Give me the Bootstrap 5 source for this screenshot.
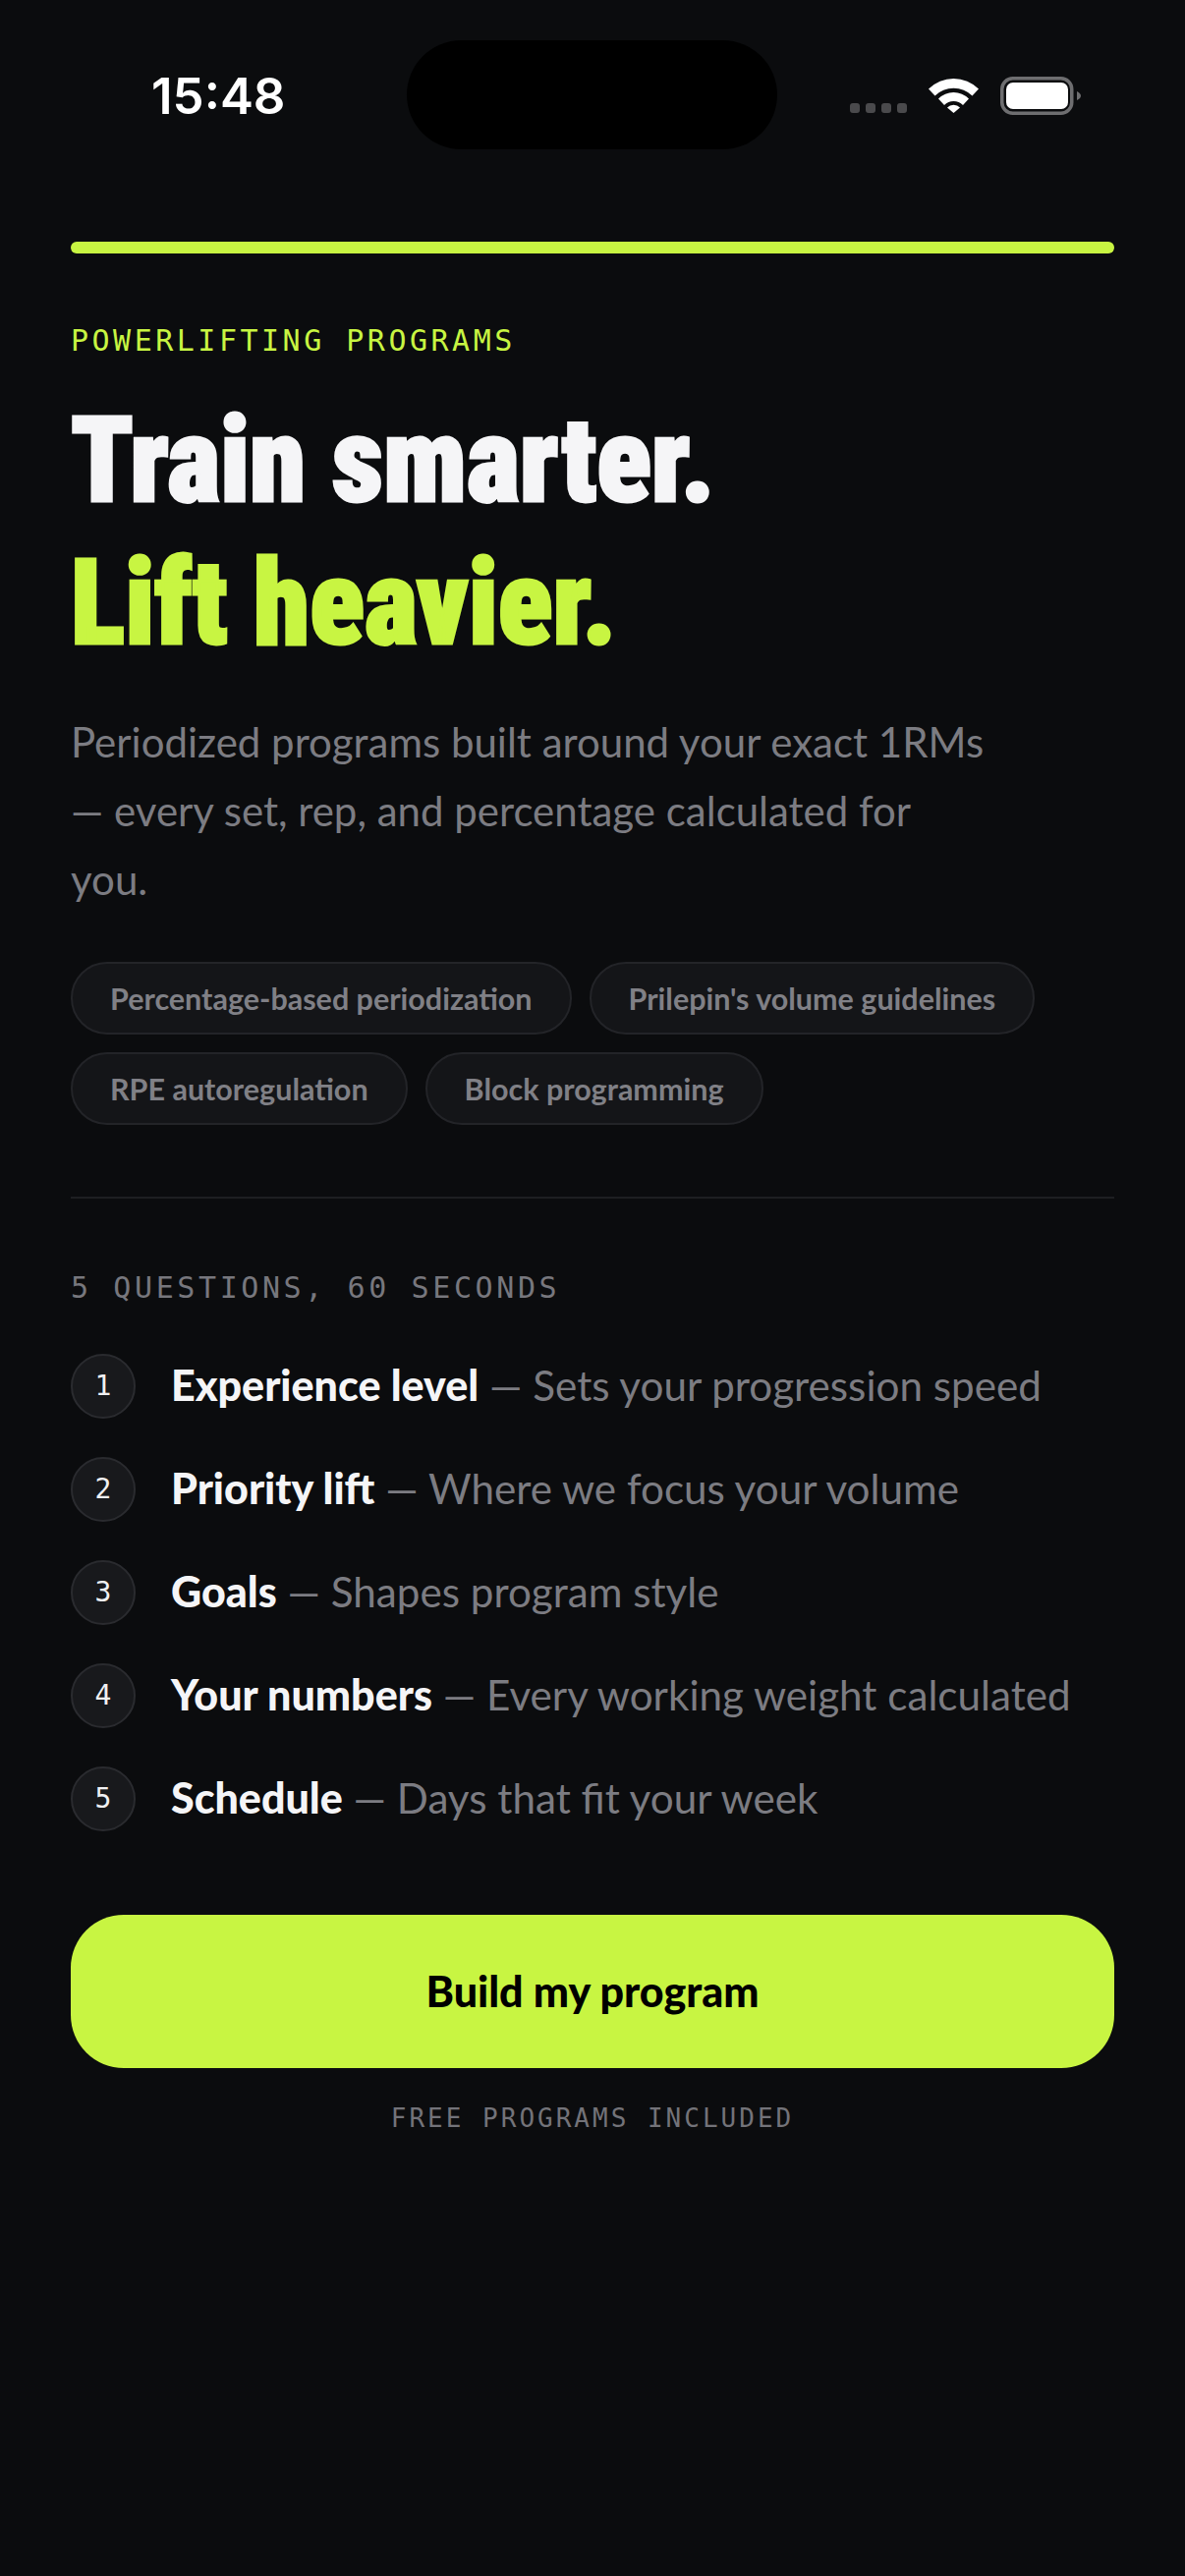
<!doctype html>
<html lang="en"><head><meta charset="utf-8"><title>Powerlifting Programs</title>
<link href="https://cdn.jsdelivr.net/npm/bootstrap@5.3.0/dist/css/bootstrap.min.css" rel="stylesheet">
<style>
html,body{background:#0b0c0e;margin:0;height:2622px;overflow:hidden}
body{font-family:Lato,"Noto Sans",sans-serif;color:#f5f5f7}
.statusbar{height:152px;padding:41px 0 0}
.clock{font-family:Inter,sans-serif;font-weight:600;font-size:51px;line-height:1;width:414px;padding:31px 0 0 154px;color:#fff}
.island{width:377px;height:111px;background:#000;border-radius:56px}
.statusicons{flex:1;padding:37px 0 0 74px;gap:22px}
.sigdots{gap:6px;margin-top:27px}
.sigdots i{display:block;width:10px;height:10px;border-radius:3px;background:#4a4a4c}
.shell{padding:94px 72px 0}
.accentbar{height:12px;border-radius:6px;background:#c8f542}
.eyebrow{font-family:"DejaVu Sans Mono",monospace;font-size:30px;letter-spacing:3.5px;line-height:36px;color:#c8f542;margin-top:71px}
.headline{font-family:Roboto,sans-serif;font-weight:900;font-size:120px;line-height:145px;margin:32px 0 -1px;font-stretch:75%;transform:scaleX(.96);transform-origin:left center;white-space:nowrap;-webkit-text-stroke:3px currentColor}
.headline .lime{color:#c8f542;display:block}
.headline .wht{display:block;color:#f5f5f7}
.blurb{font-size:42px;line-height:70px;color:#7c7c82;margin:34px 0 0}
.chipwrap{gap:18px;margin-top:49px}
.chipitem{height:74px;border:2px solid #232428;background:#141518;border-radius:37px;padding:0 38px;font-size:30.500px;font-weight:700;color:#808086;line-height:70px}
.rule{height:2px;background:#1e1f22;margin-top:73px}
.seclabel{font-family:"DejaVu Sans Mono",monospace;font-size:30px;letter-spacing:3.6px;line-height:36px;color:#77777d;margin-top:73px}
.steps{margin-top:29px}
.steprow{height:105px;gap:36px}
.stepnum{width:66px;height:66px;flex:none;border-radius:50%;background:#18191c;border:2px solid #2a2b2f;font-family:"DejaVu Sans Mono",monospace;font-size:28px;color:#f0f0f2}
.steptxt{font-size:42.200px;color:#7c7c82;white-space:nowrap}
.steptxt b{color:#f5f5f7;font-weight:900;font-size:43px}
.cta{display:block;width:100%;height:156px;border-radius:54px;background:#c8f542;border:0;color:#000;font-size:43px;font-weight:900;margin-top:66px}
.cta:hover,.cta:active{background:#c8f542;color:#000}
.foot{font-family:"DejaVu Sans Mono",monospace;font-size:26px;letter-spacing:3px;line-height:36px;color:#737379;text-align:center;margin-top:33px}
</style></head><body>
<div class="statusbar d-flex">
  <div class="clock">15:48</div>
  <div class="island"></div>
  <div class="statusicons d-flex align-items-start justify-content-start">
    <div class="sigdots d-flex"><i></i><i></i><i></i><i></i></div>
    <svg width="51" height="37" viewBox="0 0 51 37"><path d="M0 12.500A36 36 0 0 1 51 12.500L44.500 19.500A27 27 0 0 0 6.500 19.500Z" fill="#fff"/><path d="M10 22.500A22 22 0 0 1 41 22.500L35 29A13.500 13.500 0 0 0 16 29Z" fill="#fff"/><path d="M19 31.500A9 9 0 0 1 32 31.500L25.500 37Z" fill="#fff"/></svg>
    <svg width="82" height="39" viewBox="0 0 82 39"><rect x="1.750" y="1.750" width="71" height="35.500" rx="11" fill="none" stroke="#6e6e70" stroke-width="3.500"/><rect x="6" y="6" width="63" height="27" rx="7" fill="#fff"/><path d="M78 15q4 2 4 4.500t-4 4.500Z" fill="#6e6e70"/></svg>
  </div>
</div>
<main class="shell">
  <div class="accentbar"></div>
  <div class="eyebrow">POWERLIFTING PROGRAMS</div>
  <h1 class="headline"><span class="wht">Train smarter.</span><span class="lime">Lift heavier.</span></h1>
  <p class="blurb">Periodized programs built around your exact 1RMs<br>— every set, rep, and percentage calculated for<br>you.</p>
  <div class="chipwrap d-flex flex-wrap">
    <span class="chipitem">Percentage-based periodization</span>
    <span class="chipitem">Prilepin's volume guidelines</span>
    <span class="chipitem">RPE autoregulation</span>
    <span class="chipitem">Block programming</span>
  </div>
  <div class="rule"></div>
  <div class="seclabel">5 QUESTIONS, 60 SECONDS</div>
  <div class="steps">
    <div class="steprow d-flex align-items-center"><span class="stepnum d-flex align-items-center justify-content-center">1</span><span class="steptxt"><b>Experience level</b> — Sets your progression speed</span></div>
    <div class="steprow d-flex align-items-center"><span class="stepnum d-flex align-items-center justify-content-center">2</span><span class="steptxt"><b>Priority lift</b> — Where we focus your volume</span></div>
    <div class="steprow d-flex align-items-center"><span class="stepnum d-flex align-items-center justify-content-center">3</span><span class="steptxt"><b>Goals</b> — Shapes program style</span></div>
    <div class="steprow d-flex align-items-center"><span class="stepnum d-flex align-items-center justify-content-center">4</span><span class="steptxt"><b>Your numbers</b> — Every working weight calculated</span></div>
    <div class="steprow d-flex align-items-center"><span class="stepnum d-flex align-items-center justify-content-center">5</span><span class="steptxt"><b>Schedule</b> — Days that fit your week</span></div>
  </div>
  <button class="cta btn" type="button">Build my program</button>
  <div class="foot">FREE PROGRAMS INCLUDED</div>
</main>
<script src="https://cdn.jsdelivr.net/npm/bootstrap@5.3.0/dist/js/bootstrap.bundle.min.js"></script>
</body></html>
